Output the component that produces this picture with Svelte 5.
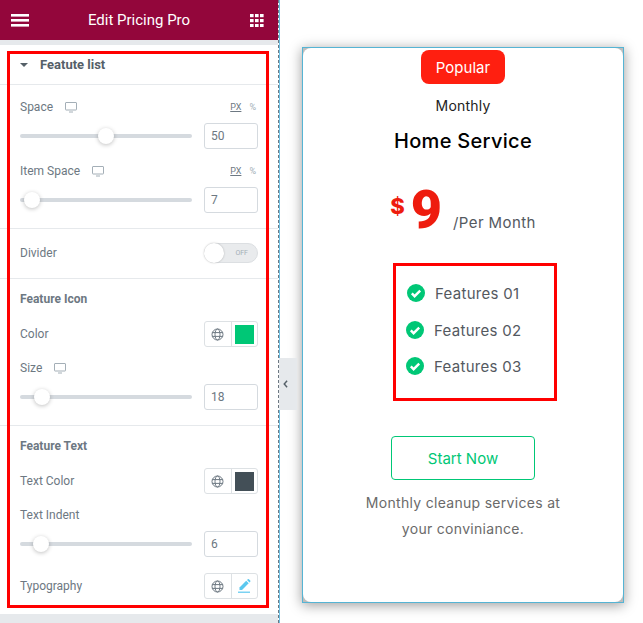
<script lang="ts">
  const features = [
    { label: 'Features 01', shift: true },
    { label: 'Features 02', shift: false },
    { label: 'Features 03', shift: false },
  ];
</script>

{#snippet monitor()}
  <svg class="monitor" width="12" height="11" viewBox="0 0 12 11">
    <path d="M1 0.5h10a.5.5 0 0 1 .5.5v6.5a.5.5 0 0 1-.5.5H1a.5.5 0 0 1-.5-.5V1A.5.5 0 0 1 1 .5z" fill="none" stroke="#a4afb7" />
    <path d="M4 10h4" stroke="#a4afb7" />
  </svg>
{/snippet}

{#snippet globe()}
  <svg width="13" height="13" viewBox="0 0 13 13" fill="none" stroke="#6d7882" stroke-width="1">
    <circle cx="6.5" cy="6.5" r="5.5" />
    <ellipse cx="6.5" cy="6.5" rx="2.5" ry="5.5" />
    <path d="M1.2 4.6h10.6M1.2 8.4h10.6" />
  </svg>
{/snippet}

{#snippet slider(pos, value)}
  <div class="slider-row">
    <div class="track"><span class="thumb" style="left: {pos}px"></span></div>
    <div class="num">{value}</div>
  </div>
{/snippet}

{#snippet units()}
  <span class="units"><span class="px">PX</span><span class="pct">%</span></span>
{/snippet}

<div class="page">
  <aside class="panel">
    <header class="topbar">
      <svg width="18" height="13" viewBox="0 0 18 13" fill="#fff">
        <rect y="0" width="18" height="2.6" />
        <rect y="5" width="18" height="2.6" />
        <rect y="10" width="18" height="2.6" />
      </svg>
      <span class="topbar-title">Edit Pricing Pro</span>
      <svg width="14" height="13" viewBox="0 0 14 13" fill="#fff">
        {#each [0, 5, 10] as y}
          {#each [0, 5, 10] as x}
            <rect {x} {y} width="3.6" height="3.2" />
          {/each}
        {/each}
      </svg>
    </header>

    <div class="controls">
      <div class="section-head">
        <span class="caret"></span>
        <span>Featute list</span>
      </div>

      <section class="group first">
        <div class="label-row">
          <span>Space</span>{@render monitor()}{@render units()}
        </div>
        {@render slider(86, '50')}
        <div class="label-row second">
          <span>Item Space</span>{@render monitor()}{@render units()}
        </div>
        {@render slider(12, '7')}
      </section>

      <section class="group divider-row">
        <span>Divider</span>
        <div class="switch"><span class="knob"></span><span class="off">OFF</span></div>
      </section>

      <section class="group icon-group">
        <h4>Feature Icon</h4>
        <div class="pick-row">
          <span>Color</span>
          <div class="picker">
            <span class="cell">{@render globe()}</span>
            <span class="cell swatch-cell"><span class="swatch green"></span></span>
          </div>
        </div>
        <div class="label-row size">
          <span>Size</span>{@render monitor()}
        </div>
        {@render slider(22, '18')}
      </section>

      <section class="group text-group">
        <h4>Feature Text</h4>
        <div class="pick-row">
          <span>Text Color</span>
          <div class="picker">
            <span class="cell">{@render globe()}</span>
            <span class="cell swatch-cell"><span class="swatch slate"></span></span>
          </div>
        </div>
        <div class="label-row indent">
          <span>Text Indent</span>
        </div>
        {@render slider(21, '6')}
        <div class="pick-row typo">
          <span>Typography</span>
          <div class="picker">
            <span class="cell">{@render globe()}</span>
            <span class="cell swatch-cell">
              <svg width="13" height="14" viewBox="0 0 13 14" fill="#5bc8ef">
                <path d="M1.5 8.5 8.2 1.8l2.5 2.5L4 11H1.5z" />
                <path d="M9 1l.8-.7a.8.8 0 0 1 1.1 0l1.3 1.3a.8.8 0 0 1 0 1.1l-.7.8z" />
                <rect x="0" y="12.6" width="12" height="1.2" />
              </svg>
            </span>
          </div>
        </div>
      </section>
    </div>

    <div class="panel-box"></div>
  </aside>

  <div class="edge">
    <button class="collapse" aria-label="Collapse">
      <svg width="5" height="8" viewBox="0 0 6 10" fill="none" stroke="#556068" stroke-width="1.8">
        <path d="M5 1 1.4 5 5 9" />
      </svg>
    </button>
  </div>

  <main class="preview">
    <article class="card">
      <div class="card-body">
        <span class="badge">Popular</span>
        <p class="period">Monthly</p>
        <h2 class="plan">Home Service</h2>
        <div class="price">
          <span class="currency">$</span>
          <span class="amount">9</span>
          <span class="per">/Per Month</span>
        </div>
        <ul class="features">
          {#each features as f}
            <li class:shift={f.shift}>
              <svg width="18" height="18" viewBox="0 0 18 18">
                <circle cx="9" cy="9" r="9" fill="#00c776" />
                <path d="M4.8 9.4 7.6 12.2 13.2 6.6" fill="none" stroke="#fff" stroke-width="2.4" />
              </svg>
              <span>{f.label}</span>
            </li>
          {/each}
        </ul>
        <a class="cta" href="#start">Start Now</a>
        <p class="note">Monthly cleanup services at<br />your conviniance.</p>
      </div>
    </article>
  </main>
</div>

<style>
  :global(body) {
    margin: 0;
    background: #fff;
  }

  .page {
    display: flex;
    width: 643px;
    height: 623px;
    overflow: hidden;
    font-family: Roboto, "Liberation Sans", sans-serif;
    color: #6d7882;
  }

  .panel {
    position: relative;
    width: 278px;
    flex-shrink: 0;
    background: #e6e9ec;
    display: flex;
    flex-direction: column;
  }

  .topbar {
    height: 40px;
    flex-shrink: 0;
    background: #93063b;
    display: flex;
    align-items: center;
    justify-content: space-between;
    padding: 0 14px 0 11px;
    color: #fff;
  }

  .topbar-title {
    font-size: 15px;
    margin-right: 1px;
  }

  .controls {
    margin-top: 5px;
    height: 569px;
    background: #fff;
    font-size: 12px;
  }

  .section-head {
    height: 40px;
    box-sizing: border-box;
    padding: 0 0 0 20px;
    display: flex;
    align-items: center;
    gap: 12px;
    font-size: 13px;
    font-weight: 700;
    color: #556068;
    border-bottom: 1px solid #e6e9ec;
  }

  .caret {
    width: 0;
    height: 0;
    border-left: 4px solid transparent;
    border-right: 4px solid transparent;
    border-top: 4px solid #556068;
  }

  .group {
    padding: 0 20px;
    border-bottom: 1px solid #e6e9ec;
    box-sizing: border-box;
  }

  .first {
    height: 144px;
    padding-top: 15px;
  }

  .label-row {
    display: flex;
    align-items: center;
    height: 14px;
    gap: 12px;
  }

  .label-row.second {
    margin-top: 15px;
  }

  .monitor {
    flex-shrink: 0;
  }

  .units {
    margin-left: auto;
    display: flex;
    gap: 8px;
    font-size: 9px;
    margin-right: 2px;
  }

  .px {
    color: #6d7882;
    text-decoration: underline;
  }

  .pct {
    color: #a4afb7;
  }

  .slider-row {
    display: flex;
    align-items: center;
    justify-content: space-between;
    margin-top: 9px;
  }

  .track {
    position: relative;
    width: 172px;
    height: 4px;
    border-radius: 2px;
    background: #d5dadf;
  }

  .thumb {
    position: absolute;
    top: 50%;
    width: 16px;
    height: 16px;
    border-radius: 50%;
    background: #fff;
    box-shadow: 0 1px 4px rgba(0, 0, 0, 0.25);
    transform: translate(-8px, -50%);
  }

  .num {
    width: 54px;
    height: 26px;
    box-sizing: border-box;
    border: 1px solid #d5dadf;
    border-radius: 3px;
    padding-left: 6px;
    display: flex;
    align-items: center;
    font-size: 12px;
    color: #6d7882;
  }

  .divider-row {
    height: 50px;
    padding-bottom: 2px;
    display: flex;
    align-items: center;
    justify-content: space-between;
  }

  .switch {
    position: relative;
    width: 54px;
    height: 20px;
    box-sizing: border-box;
    border: 1px solid #dcdfe2;
    border-radius: 10px;
    background: #e9ebed;
  }

  .knob {
    position: absolute;
    left: -1px;
    top: -1px;
    width: 20px;
    height: 20px;
    border-radius: 50%;
    background: #fff;
    box-shadow: 0 0 2px rgba(0, 0, 0, 0.25);
  }

  .off {
    position: absolute;
    right: 9px;
    top: 4px;
    font-size: 7px;
    line-height: 10px;
    color: #a4afb7;
  }

  .icon-group {
    height: 147px;
    padding-top: 13px;
  }

  h4 {
    margin: 0;
    font-size: 12px;
    line-height: 14px;
    font-weight: 700;
    color: #6d7882;
  }

  .pick-row {
    display: flex;
    align-items: center;
    justify-content: space-between;
    margin-top: 15px;
  }

  .picker {
    display: flex;
    width: 54px;
    height: 26px;
    box-sizing: border-box;
    border: 1px solid #dde1e4;
    border-radius: 3px;
  }

  .cell {
    display: flex;
    align-items: center;
    justify-content: center;
    width: 27px;
  }

  .swatch-cell {
    width: 26px;
    border-left: 1px solid #dde1e4;
  }

  .swatch {
    width: 19px;
    height: 19px;
  }

  .green {
    background: #00c776;
  }

  .slate {
    background: #434f57;
  }

  .label-row.size {
    margin-top: 14px;
  }

  .text-group {
    padding-top: 13px;
    border-bottom: 0;
  }

  .label-row.indent {
    margin-top: 14px;
  }

  .pick-row.typo {
    margin-top: 16px;
  }

  .panel-box {
    position: absolute;
    box-sizing: border-box;
    border: 3px solid #f00;
    left: 7px;
    top: 51px;
    width: 262px;
    height: 557px;
  }

  .edge {
    position: relative;
    width: 2px;
    flex-shrink: 0;
    background: repeating-linear-gradient(to bottom, #6d7882 0 3px, #fff 3px 5px);
    border-right: 1px solid #6ec1e4;
    box-sizing: border-box;
  }

  .collapse {
    position: absolute;
    left: 1px;
    top: 358px;
    width: 18px;
    height: 52px;
    padding: 0 6px 0 0;
    border: 0;
    background: #e6e9ec;
    display: flex;
    align-items: center;
    justify-content: center;
  }

  .preview {
    flex: 1;
    padding: 47px 0 0 22px;
    font-family: Inter, "Open Sans", sans-serif;
  }

  .card {
    width: 322px;
    height: 556px;
    box-sizing: border-box;
    border: 1px solid #55b4d4;
    background: #bdbdbd;
    box-shadow: 0 2px 12px rgba(0, 0, 0, 0.4);
  }

  .card-body {
    height: 100%;
    border-radius: 8px;
    background: #fff;
    display: flex;
    flex-direction: column;
    align-items: center;
  }

  .badge {
    margin-top: 2px;
    width: 84px;
    height: 34px;
    border-radius: 8px;
    background: #ff1f10;
    color: #fff;
    font-size: 15px;
    display: flex;
    align-items: center;
    justify-content: center;
  }

  .period {
    margin: 12px 0 0;
    font-size: 14px;
    line-height: 20px;
    letter-spacing: 0.2px;
    color: #222;
  }

  .plan {
    margin: 12px 0 0;
    font-size: 20px;
    line-height: 26px;
    letter-spacing: 0.3px;
    font-weight: 500;
    color: #000;
  }

  .price {
    margin-top: 31px;
    height: 60px;
    display: flex;
    align-items: flex-start;
    color: #ee1c0e;
    font-family: Inter, sans-serif;
    font-weight: 800;
  }

  .currency {
    font-size: 22px;
    line-height: 28px;
    margin-top: 7px;
    margin-right: 6px;
  }

  .amount {
    font-family: Roboto, sans-serif;
    font-weight: 900;
    font-size: 54px;
    line-height: 54px;
    margin-top: -2px;
    margin-right: 11px;
  }

  .per {
    font-weight: 400;
    font-size: 15px;
    line-height: 20px;
    letter-spacing: 0.4px;
    color: #54595f;
    margin-top: 28px;
  }

  .features {
    list-style: none;
    margin: 18px 0 0 24px;
    height: 138px;
    box-sizing: border-box;
    width: 164px;
    padding: 18px 0 0 10px;
    border: 3px solid #f00;
    display: flex;
    flex-direction: column;
    gap: 18px;
    font-size: 15px;
    letter-spacing: 0.3px;
    color: #54595f;
  }

  .features li {
    display: flex;
    align-items: center;
    gap: 10px;
    height: 18px;
  }

  .features li.shift {
    margin: 0 0 1px 1px;
  }

  .cta {
    margin-top: 35px;
    width: 144px;
    height: 44px;
    box-sizing: border-box;
    border: 1px solid #00c776;
    border-radius: 4px;
    color: #00c776;
    font-size: 15px;
    text-decoration: none;
    display: flex;
    align-items: center;
    justify-content: center;
  }

  .note {
    margin: 10px 0 0;
    font-size: 14px;
    line-height: 26px;
    letter-spacing: 0.3px;
    text-align: center;
    color: #6a6a6a;
  }
</style>
